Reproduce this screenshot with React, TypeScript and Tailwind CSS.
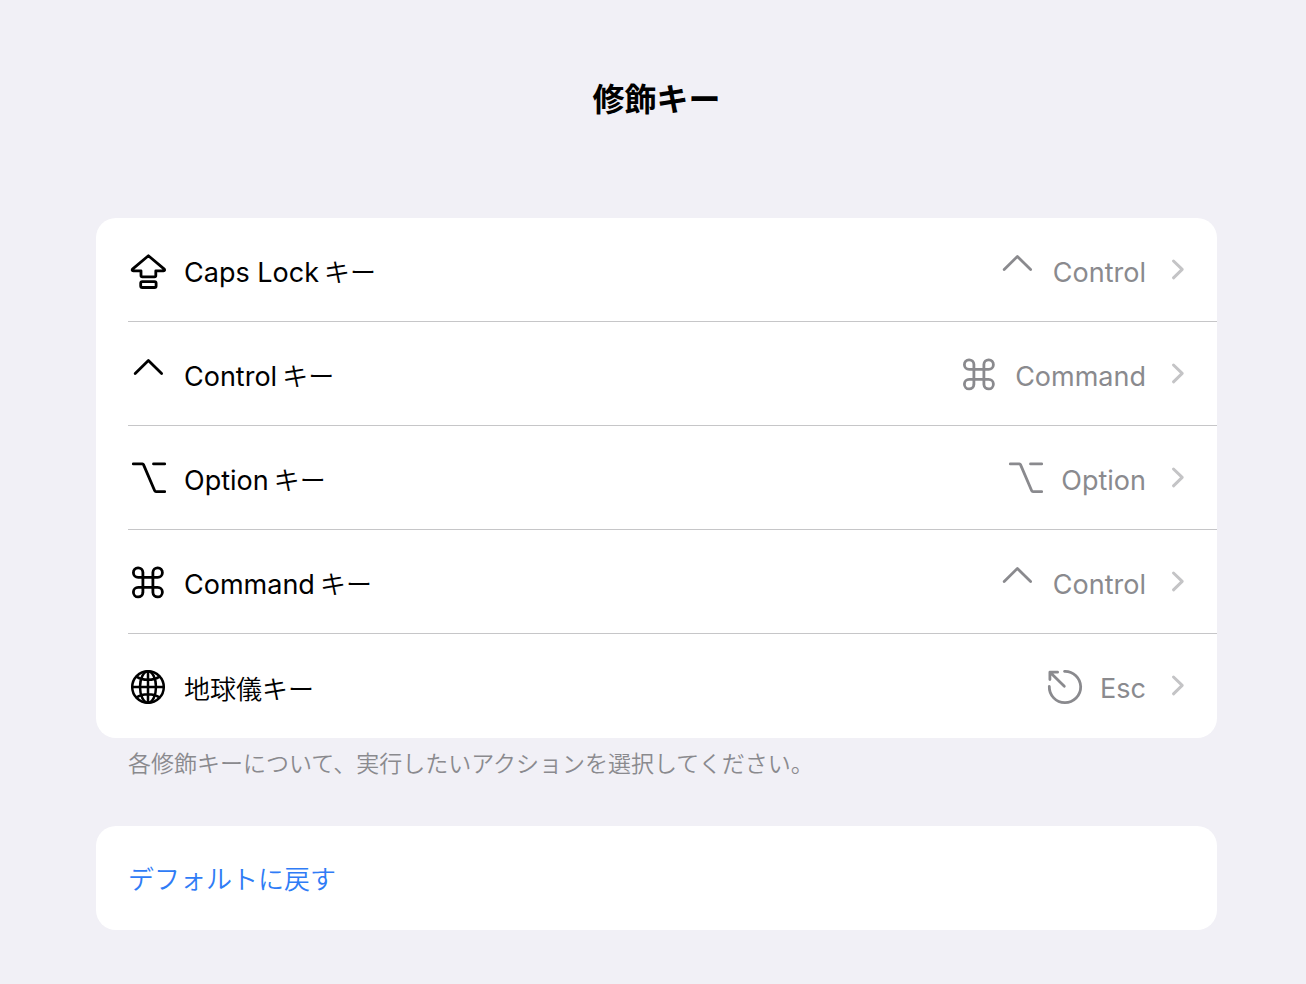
import type { ReactNode } from "react";

const LATIN = "font-['Inter','Noto_Sans_CJK_JP',sans-serif]";
const KANA = "font-['Noto_Sans_CJK_JP',sans-serif]";

function Glyph({ children }: { children: ReactNode }) {
  return (
    <svg
      viewBox="0 0 40 40"
      className="size-10 shrink-0"
      fill="none"
      stroke="currentColor"
      strokeWidth="2.8"
      strokeLinecap="round"
      strokeLinejoin="round"
      aria-hidden="true"
    >
      {children}
    </svg>
  );
}

function CapsLockIcon() {
  return (
    <Glyph>
      <path d="M20.4 5.8 36 18.9c1 .9.8 1.9-.5 1.9h-7.700v4.700c0 .8-.5 1.300-1.300 1.300H14.300c-.8 0-1.300-.5-1.300-1.300v-4.700H5.300c-1.300 0-1.500-1-.5-1.900z" />
      <rect x="12.7" y="31.6" width="15.4" height="5.9" rx="1.6" />
    </Glyph>
  );
}

function ControlIcon() {
  return (
    <Glyph>
      <path d="M7.200 19.400 20.400 6.400l13.200 13" />
    </Glyph>
  );
}

function OptionIcon() {
  return (
    <Glyph>
      <path d="M5.300 5.900h9.200q.7 0 1 .7l11.200 26.200q.4.900 1.300.9h8.700M25.500 5.900h11.200" />
    </Glyph>
  );
}

function CommandIcon() {
  return (
    <Glyph>
      <path d="M14.900 10.400v20a4.750 4.750 0 1 1-4.750-4.950h19.500a4.750 4.750 0 1 1-4.750 4.950v-20a4.750 4.750 0 1 1 4.750 4.950h-19.500a4.750 4.750 0 1 1 4.750-4.950z" />
    </Glyph>
  );
}

function GlobeIcon() {
  return (
    <Glyph>
      <g strokeWidth="2.5">
        <circle cx="20" cy="21" r="15.8" />
        <ellipse cx="20" cy="21" rx="8" ry="15.8" />
        <path d="M20 5.200v31.600M4.200 21h31.600M8.500 10.600q4.600 3.200 11.500 3.200t11.500-3.200M8.500 31.400q4.600-3.200 11.500-3.200t11.500 3.200" />
      </g>
    </Glyph>
  );
}

function EscapeIcon() {
  return (
    <Glyph>
      <path d="M20.500 5.300A15.700 15.700 0 1 1 5.300 20.500" />
      <path d="M5.900 13.600V6.200h7.700M6.300 6.600 20.300 20.200" />
    </Glyph>
  );
}

function Chevron() {
  return (
    <svg
      viewBox="0 0 16 24"
      className="h-6 w-4 shrink-0 text-[#c4c4c6]"
      fill="none"
      stroke="currentColor"
      strokeWidth="3"
      strokeLinecap="round"
      strokeLinejoin="round"
      aria-hidden="true"
    >
      <path d="M4.500 3 13.200 11.400 4.500 19.800" />
    </svg>
  );
}

type Row = {
  icon: ReactNode;
  name?: string;
  suffix: string;
  actionIcon: ReactNode;
  action: string;
};

const rows: Row[] = [
  { icon: <CapsLockIcon />, name: "Caps Lock", suffix: "キー", actionIcon: <ControlIcon />, action: "Control" },
  { icon: <ControlIcon />, name: "Control", suffix: "キー", actionIcon: <CommandIcon />, action: "Command" },
  { icon: <OptionIcon />, name: "Option", suffix: "キー", actionIcon: <OptionIcon />, action: "Option" },
  { icon: <CommandIcon />, name: "Command", suffix: "キー", actionIcon: <ControlIcon />, action: "Control" },
  { icon: <GlobeIcon />, suffix: "地球儀キー", actionIcon: <EscapeIcon />, action: "Esc" },
];

export default function App() {
  return (
    <main lang="ja" className={`min-h-screen bg-[#f1f0f6] pt-[72px] pr-[89px] pb-[54px] pl-24 text-black ${LATIN}`}>
      <h1 className={`text-center text-[32px] leading-[50px] font-bold ${KANA}`}>修飾キー</h1>

      <ul className="mt-24 overflow-hidden rounded-[20px] bg-white">
        {rows.map((row) => (
          <li key={row.name ?? row.suffix} className="group">
            <button type="button" className="flex w-full pl-8 text-left">
              <span className="flex h-[104px] flex-1 items-center border-b border-[#c6c6c8] pr-8 group-last:border-transparent">
                {row.icon}
                <span className="ml-4 flex items-baseline gap-[5px] pt-1 text-[27px] leading-9">
                  {row.name && <span>{row.name}</span>}
                  <span className={`text-[26px] font-[350] ${KANA}`}>{row.suffix}</span>
                </span>
                <span className="ml-auto flex items-center gap-4 text-[#8a8a8e]">
                  {row.actionIcon}
                  <span className="pt-1.5 text-[27px] leading-9">{row.action}</span>
                </span>
                <span className="ml-[23px] flex">
                  <Chevron />
                </span>
              </span>
            </button>
          </li>
        ))}
      </ul>

      <p className={`mt-1.5 pl-8 text-[23px] leading-9 font-[350] text-[#8a8a8e] ${KANA}`}>
        各修飾キーについて、実行したいアクションを選択してください。
      </p>

      <section className="mt-[46px] rounded-[20px] bg-white">
        <button type="button" className={`flex h-[104px] w-full items-center px-8 pb-0.5 text-left text-[26px] font-[350] text-[#2f7cf6] ${KANA}`}>
          デフォルトに戻す
        </button>
      </section>
    </main>
  );
}
